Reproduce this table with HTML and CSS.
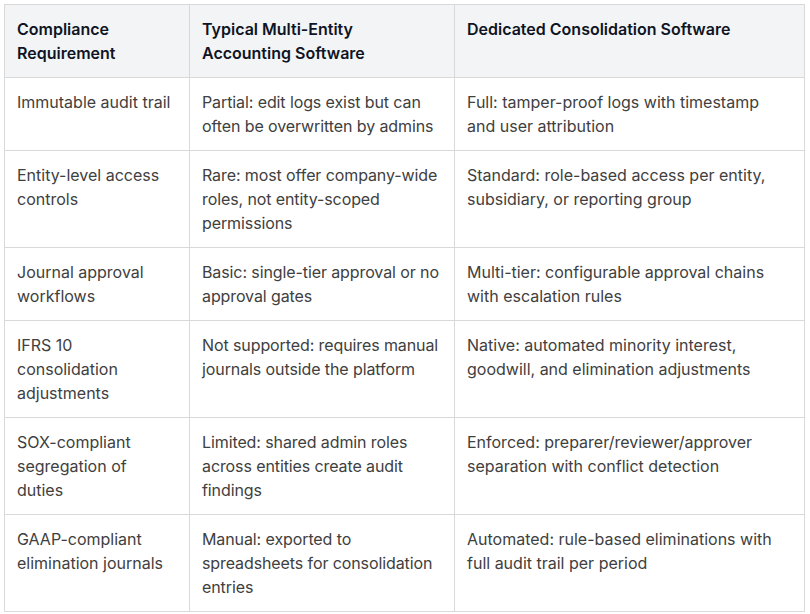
FILE: index.html
```html
<!DOCTYPE html>
<html lang="en">
<head>
<meta charset="utf-8">
<link rel="stylesheet" href="styles.css">
</head>
<body>
<table class="cmp">
  <colgroup>
    <col class="c1"><col class="c2"><col class="c3">
  </colgroup>
  <thead>
    <tr>
      <th>Compliance Requirement</th>
      <th>Typical Multi-Entity Accounting Software</th>
      <th class="last">Dedicated Consolidation Software</th>
    </tr>
  </thead>
  <tbody>
    <tr>
      <td>Immutable audit trail</td>
      <td class="mid">Partial: edit logs exist but can often be overwritten by admins</td>
      <td class="last">Full: tamper-proof logs with timestamp and user attribution</td>
    </tr>
    <tr>
      <td>Entity-level access controls</td>
      <td class="mid">Rare: most offer company-wide roles, not entity-scoped permissions</td>
      <td class="last">Standard: role-based access per entity, subsidiary, or reporting group</td>
    </tr>
    <tr>
      <td>Journal approval workflows</td>
      <td class="mid">Basic: single-tier approval or no approval gates</td>
      <td class="last">Multi-tier: configurable approval chains with escalation rules</td>
    </tr>
    <tr>
      <td>IFRS 10 consolidation adjustments</td>
      <td class="mid">Not supported: requires manual journals outside the platform</td>
      <td class="last">Native: automated minority interest, goodwill, and elimination adjustments</td>
    </tr>
    <tr>
      <td>SOX-compliant segregation of duties</td>
      <td class="mid">Limited: shared admin roles across entities create audit findings</td>
      <td class="last">Enforced: preparer/reviewer/approver separation with conflict detection</td>
    </tr>
    <tr>
      <td>GAAP-compliant elimination journals</td>
      <td class="mid">Manual: exported to spreadsheets for consolidation entries</td>
      <td class="last">Automated: rule-based eliminations with full audit trail per period</td>
    </tr>
  </tbody>
</table>
</body>
</html>
```

FILE: styles.css
```css
body {
  margin: 4px;
  background: #ffffff;
  font-family: Inter, "Noto Sans", sans-serif;
}
.cmp {
  border-collapse: collapse;
  width: 800px;
  table-layout: fixed;
  font-size: 16px;
  line-height: 24px;
}
.c1 { width: 185px; }
.c2 { width: 265px; }
.c3 { width: 350px; }
.cmp th, .cmp td {
  border: 1px solid #d9d9d9;
  padding: 12px 12px;
  text-align: left;
  vertical-align: top;
}
.cmp .last {
  padding-right: 20px;
}
.cmp .mid {
  letter-spacing: -0.1px;
}
.cmp th {
  background: #f3f4f6;
  color: #0f1424;
  font-weight: 600;
}
.cmp td {
  color: #404040;
  font-weight: 400;
}
```
